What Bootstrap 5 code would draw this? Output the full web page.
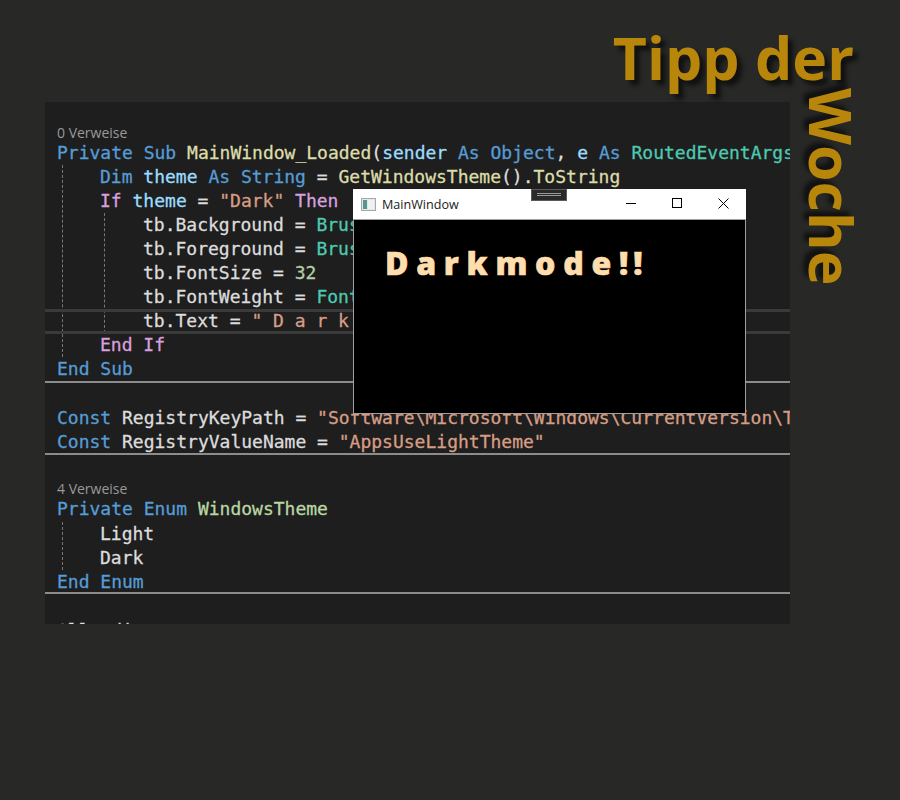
<!DOCTYPE html>
<html lang="de">
<head>
<meta charset="utf-8">
<title>Tipp der Woche</title>
<link rel="stylesheet" href="https://cdn.jsdelivr.net/npm/bootstrap@5.3.0/dist/css/bootstrap.min.css">
<style>
html,body{height:100%}
body{background:#282826;overflow:hidden}
.stage{position:relative;width:900px;height:800px;padding:102px 110px 0 45px}
.ttl{font-family:"Open Sans",sans-serif;font-weight:700;font-size:59px;line-height:1;color:#b8860b;text-shadow:5px 5px 4px #111}
.ttl-a{position:absolute;top:28px;right:46px;white-space:nowrap}
.ttl-b{position:absolute;top:88px;left:802px;writing-mode:vertical-rl;white-space:nowrap;text-shadow:-5px 5px 4px #111}
.code{position:relative;height:522px;background:#1e1e1e;overflow:hidden;padding:18.6px 0 0 12px;font-family:"DejaVu Sans Mono",monospace;font-size:18px;line-height:24.1px;color:#dcdcdc;-webkit-text-stroke:.3px}
.ln{height:24.1px;white-space:pre}
.lens{font-family:"Open Sans",sans-serif;font-size:14px;line-height:23px;height:20px;color:#999;-webkit-text-stroke:0}
.lens-b{margin-top:-.5px}
.g1{margin-left:5px;border-left:1px dashed #777;padding-left:37px}
.g2{margin-left:4px;border-left:1px dashed #777;padding-left:38px}
.cur{position:relative}
.cur::before,.cur::after{content:"";position:absolute;left:-200px;width:900px;height:3px;background:#3a3a3a}
.cur::before{top:0}
.cur::after{bottom:-1px}
.sep{height:2px;margin:-1px -12px;background:#8c8c8c;position:relative}
.sep-c{margin-top:-2px}
.ln-clip{margin-top:2px}
.kw{color:#569cd6}.ctl{color:#d8a0df}.str{color:#d69d85}.typ{color:#4ec9b0}.fn{color:#dcdcaa}.var{color:#9cdcfe}.num{color:#b5cea8}.enm{color:#b8d7a3}
.win{position:absolute;left:353px;top:189px;width:393px;height:225px;border:1px solid #a0a0a0;border-top:0;background:#000;font-family:"Open Sans",sans-serif}
.bar{height:31px;margin:0 -1px;background:#fff;border-bottom:1px solid #a0a0a0;color:#1a1a1a;font-size:12.6px}
.bar span{position:relative;top:1px}
.ico{width:15px;height:13px;margin:0 6px 0 8px}
.wbtn{width:46px;height:28px}
.wbtns{align-self:flex-start}
.dark{padding:21px 0 0 31px;font-size:32px;font-weight:800;line-height:44px;color:#ffdead;white-space:pre;word-spacing:-.6px;-webkit-text-stroke:.6px #ffdead}
.bang{letter-spacing:5px;font-variant-ligatures:none}
.tool{position:absolute;left:531px;top:189px;width:36px;height:12px;background:#2a2a2a;border:1px solid #5a5a5a;padding-top:3px}
.tool i{display:block;height:3px;margin:0 5px;border-top:1px solid #999;border-bottom:1px solid #999}
</style>
</head>
<body>
<div class="stage">
<div class="code">
<div class="lens">0 Verweise</div>
<div class="ln"><span class="kw">Private Sub</span> <span class="fn">MainWindow_Loaded</span>(<span class="var">sender</span> <span class="kw">As Object</span>, <span class="var">e</span> <span class="kw">As</span> <span class="typ">RoutedEventArgs</span>)</div>
<div class="g1">
<div class="ln"><span class="kw">Dim</span> <span class="var">theme</span> <span class="kw">As String</span> = <span class="fn">GetWindowsTheme</span>().<span class="fn">ToString</span></div>
<div class="ln"><span class="ctl">If</span> <span class="var">theme</span> = <span class="str">"Dark"</span> <span class="ctl">Then</span></div>
<div class="g2">
<div class="ln">tb.Background = <span class="typ">Brushes</span>.Black</div>
<div class="ln">tb.Foreground = <span class="typ">Brushes</span>.NavajoWhite</div>
<div class="ln">tb.FontSize = <span class="num">32</span></div>
<div class="ln">tb.FontWeight = <span class="typ">FontWeights</span>.Black</div>
<div class="ln cur">tb.Text = <span class="str">" D a r k m o d e !!"</span></div>
</div>
<div class="ln"><span class="ctl">End If</span></div>
</div>
<div class="ln"><span class="kw">End Sub</span></div>
<div class="sep"></div>
<div class="ln"></div>
<div class="ln"><span class="kw">Const</span> RegistryKeyPath = <span class="str">"Software\Microsoft\Windows\CurrentVersion\Themes\Personalize"</span></div>
<div class="ln"><span class="kw">Const</span> RegistryValueName = <span class="str">"AppsUseLightTheme"</span></div>
<div class="sep"></div>
<div class="ln"></div>
<div class="lens lens-b">4 Verweise</div>
<div class="ln"><span class="kw">Private Enum</span> <span class="enm">WindowsTheme</span></div>
<div class="g1">
<div class="ln">Light</div>
<div class="ln">Dark</div>
</div>
<div class="ln"><span class="kw">End Enum</span></div>
<div class="sep sep-c"></div>
<div class="ln"></div>
<div class="ln ln-clip">Allerdings</div>
</div>
<div class="ttl ttl-a">Tipp der</div>
<div class="ttl ttl-b">Woche</div>
<div class="win">
<div class="bar d-flex align-items-center">
<svg class="ico" viewBox="0 0 15 13"><rect x=".5" y=".5" width="14" height="12" fill="#dfe8ea" stroke="#a8a8a8"/><rect x="2" y="2" width="4" height="9" fill="#5a9490"/><rect x="7" y="2" width="6" height="9" fill="#eef2f2"/></svg>
<span>MainWindow</span>
<div class="ms-auto d-flex wbtns">
<div class="wbtn d-flex align-items-center justify-content-center"><svg width="10" height="10" viewBox="0 0 10 10"><path d="M0 5.5h10" stroke="#000"/></svg></div>
<div class="wbtn d-flex align-items-center justify-content-center"><svg width="10" height="10" viewBox="0 0 10 10"><rect x=".5" y=".5" width="9" height="9" fill="none" stroke="#000"/></svg></div>
<div class="wbtn d-flex align-items-center justify-content-center"><svg width="11" height="11" viewBox="0 0 11 11"><path d="M.5.5l10 10M10.5.5l-10 10" stroke="#000" fill="none"/></svg></div>
</div>
</div>
<div class="dark">D a r k m o d e <span class="bang">!!</span></div>
</div>
<div class="tool"><i></i></div>
</div>
</body>
</html>
